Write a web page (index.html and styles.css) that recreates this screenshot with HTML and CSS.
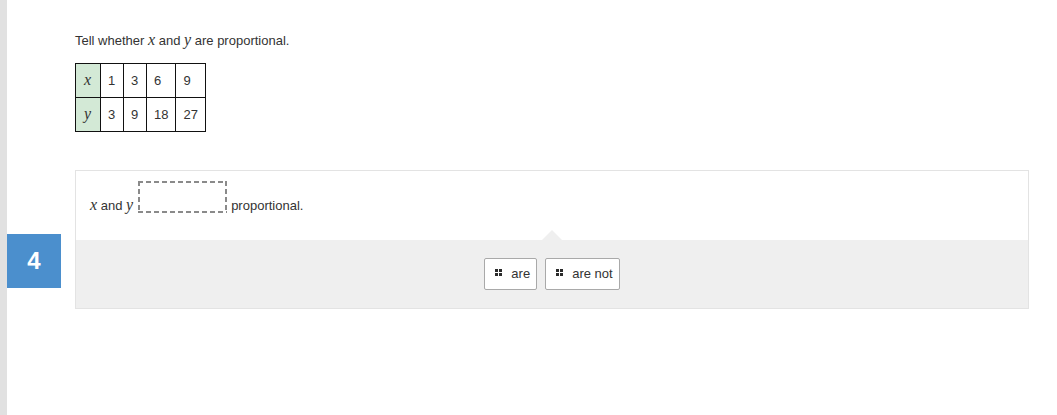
FILE: index.html
```html
<!DOCTYPE html>
<html>
<head>
<meta charset="utf-8">
<link rel="stylesheet" href="styles.css">
</head>
<body>
<div class="page">
  <div class="rail"></div>
  <div class="numcol"><div class="num">4</div></div>
  <main class="content">
    <p class="prompt">Tell whether <i class="m">x</i> and <i class="m">y</i> are proportional.</p>
    <table class="vals">
      <tr><td class="hd"><i class="m">x</i></td><td>1</td><td>3</td><td>6</td><td>9</td></tr>
      <tr><td class="hd"><i class="m">y</i></td><td>3</td><td>9</td><td>18</td><td>27</td></tr>
    </table>
    <section class="card">
      <div class="stem"><i class="m">x</i> and <i class="m">y</i><span class="drop"></span>proportional.</div>
      <div class="tray">
        <button class="chip"><svg class="grip" width="7" height="7" viewBox="0 0 7 7"><rect x="0" y="0" width="3" height="3"/><rect x="4" y="0" width="3" height="3"/><rect x="0" y="4" width="3" height="3"/><rect x="4" y="4" width="3" height="3"/></svg>are</button>
        <button class="chip"><svg class="grip" width="7" height="7" viewBox="0 0 7 7"><rect x="0" y="0" width="3" height="3"/><rect x="4" y="0" width="3" height="3"/><rect x="0" y="4" width="3" height="3"/><rect x="4" y="4" width="3" height="3"/></svg>are not</button>
      </div>
    </section>
  </main>
</div>
</body>
</html>
```

FILE: styles.css
```css
html, body {
  margin: 0;
  padding: 0;
  background: #ffffff;
}

body {
  font-family: "Liberation Sans", Arial, sans-serif;
  font-size: 13px;
  line-height: 18px;
  color: #333333;
}

.page {
  display: flex;
  min-height: 415px;
}

.rail {
  width: 7px;
  flex: none;
  background: #e1e1e1;
}

.numcol {
  width: 54px;
  flex: none;
  padding-top: 234px;
}

.num {
  width: 54px;
  height: 54px;
  background: #4b8fcd;
  color: #ffffff;
  font-weight: bold;
  font-size: 24px;
  display: flex;
  align-items: center;
  justify-content: center;
}

.content {
  margin-left: 14px;
  width: 954px;
  padding-top: 32px;
}

.m {
  font-family: "Liberation Serif", "Times New Roman", serif;
  font-style: italic;
  font-size: 16px;
  line-height: 1;
}

.prompt {
  margin: 0 0 13px;
}

.vals {
  border-collapse: collapse;
  margin: 0;
}

.vals td {
  border: 1px solid #111111;
  box-sizing: content-box;
  padding: 8px 7px;
  min-width: 8px;
  line-height: 17px;
  vertical-align: middle;
}

.vals td.hd {
  background: #d3e9d6;
  padding: 8px 8px;
}

.card {
  margin-top: 38px;
  border: 1px solid #e3e3e3;
}

.stem {
  height: 69px;
  box-sizing: border-box;
  padding: 10px 14px 0;
  background: #ffffff;
}

.drop {
  display: inline-block;
  width: 89px;
  height: 32px;
  margin: 0 4px 0 5px;
  vertical-align: -3px;
  background:
    repeating-linear-gradient(90deg, #8a8a8a 0 5px, transparent 5px 8px) left top / 100% 2px no-repeat,
    repeating-linear-gradient(90deg, #8a8a8a 0 5px, transparent 5px 8px) left bottom / 100% 2px no-repeat,
    repeating-linear-gradient(180deg, #8a8a8a 0 5px, transparent 5px 8px) left top / 2px 100% no-repeat,
    repeating-linear-gradient(180deg, #8a8a8a 0 5px, transparent 5px 8px) right top / 2px 100% no-repeat;
}

.tray {
  position: relative;
  background: #efefef;
  display: flex;
  justify-content: center;
  gap: 8px;
  padding: 18px 0 18px;
}

.tray::before {
  content: "";
  position: absolute;
  top: -10px;
  left: 50%;
  margin-left: -10px;
  border-left: 10px solid transparent;
  border-right: 10px solid transparent;
  border-bottom: 10px solid #efefef;
}

.chip {
  font: inherit;
  color: #333333;
  background: #ffffff;
  border: 1px solid #a9a9a9;
  border-radius: 2px;
  height: 32px;
  padding: 0 6px 0 10px;
  display: inline-flex;
  align-items: center;
  gap: 9px;
  margin: 0;
}

.grip {
  fill: #2b2b2b;
  width: 7px;
  height: 7px;
  flex: none;
  margin-top: -4px;
}
```
